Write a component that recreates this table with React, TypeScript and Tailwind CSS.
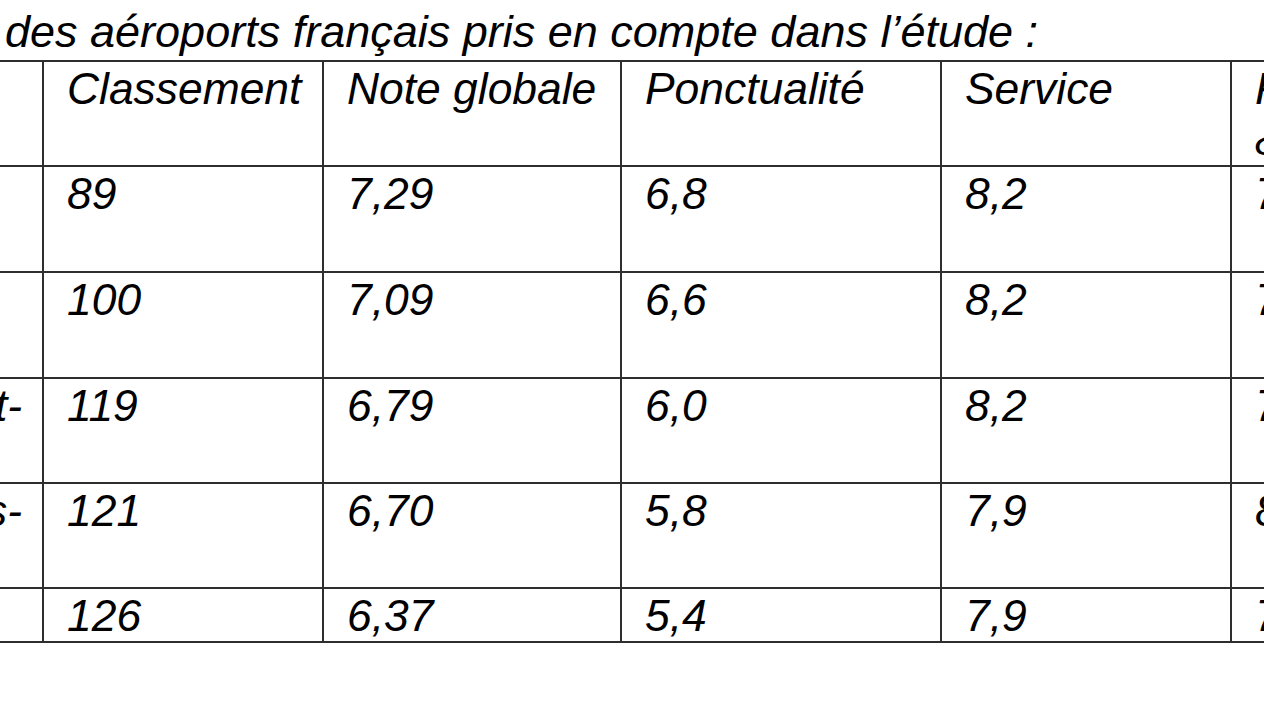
import React from 'react';

// Cropped document table: airport scores
type Row = {
  name: [string, string?]; // first line (right part visible) + optional second line
  rank: string;
  note: string;
  ponct: string;
  service: string;
  resto: string;
  height: string;
};

const rows: Row[] = [
  { name: ['Nice'], rank: '89', note: '7,29', ponct: '6,8', service: '8,2', resto: '7,2', height: 'h-[106px]' },
  { name: ['Marseille'], rank: '100', note: '7,09', ponct: '6,6', service: '8,2', resto: '7,0', height: 'h-[106px]' },
  { name: ['Lyon-Saint-', 'Exupéry'], rank: '119', note: '6,79', ponct: '6,0', service: '8,2', resto: '7,3', height: 'h-[105px]' },
  { name: ['Paris-', 'Orly'], rank: '121', note: '6,70', ponct: '5,8', service: '7,9', resto: '8,0', height: 'h-[105px]' },
  { name: ['Toulouse'], rank: '126', note: '6,37', ponct: '5,4', service: '7,9', resto: '7,1', height: 'h-[51px]' },
];

const cell = 'border-2 border-[#2e2e2e] align-top pl-[23px] pt-[1px] overflow-hidden';

function NameCell({ name }: { name: Row['name'] }) {
  const [first, second] = name;
  return (
    <td className="border-2 border-[#2e2e2e] align-top pt-[1px] overflow-hidden pl-[24px] pr-[20px]">
      {second ? (
        <>
          <div className="text-right whitespace-nowrap">{first}</div>
          <div className="text-left whitespace-nowrap">{second}</div>
        </>
      ) : (
        <div className="text-left whitespace-nowrap">{first}</div>
      )}
    </td>
  );
}

export default function App() {
  return (
    <div
      className="w-[1264px] h-[711px] overflow-hidden bg-white text-black italic text-[44.4px] leading-[1.15]"
      style={{ fontFamily: '"Liberation Sans", Arial, sans-serif' }}
    >
      <div className="h-[60px] pt-[6px] pl-[5px] whitespace-nowrap text-[45px]">
        des aéroports français pris en compte dans l’étude :
      </div>

      <table className="table-fixed border-collapse ml-[-301px] w-[1831px]">
        <colgroup>
          <col className="w-[343px]" />
          <col className="w-[280px]" />
          <col className="w-[298px]" />
          <col className="w-[320px]" />
          <col className="w-[290px]" />
          <col className="w-[300px]" />
        </colgroup>
        <thead>
          <tr className="h-[105px]">
            <th className="border-2 border-[#2e2e2e] font-normal text-left align-top" />
            <th className={`${cell} font-normal text-left`}>Classement</th>
            <th className={`${cell} font-normal text-left`}>Note globale</th>
            <th className={`${cell} font-normal text-left`}>Ponctualité</th>
            <th className={`${cell} font-normal text-left`}>Service</th>
            <th className={`${cell} font-normal text-left`}>Restauration &amp; boutiques</th>
          </tr>
        </thead>
        <tbody>
          {rows.map((r) => (
            <tr key={r.rank} className={r.height}>
              <NameCell name={r.name} />
              <td className={cell}>{r.rank}</td>
              <td className={cell}>{r.note}</td>
              <td className={cell}>{r.ponct}</td>
              <td className={cell}>{r.service}</td>
              <td className={cell}>{r.resto}</td>
            </tr>
          ))}
        </tbody>
      </table>
    </div>
  );
}
